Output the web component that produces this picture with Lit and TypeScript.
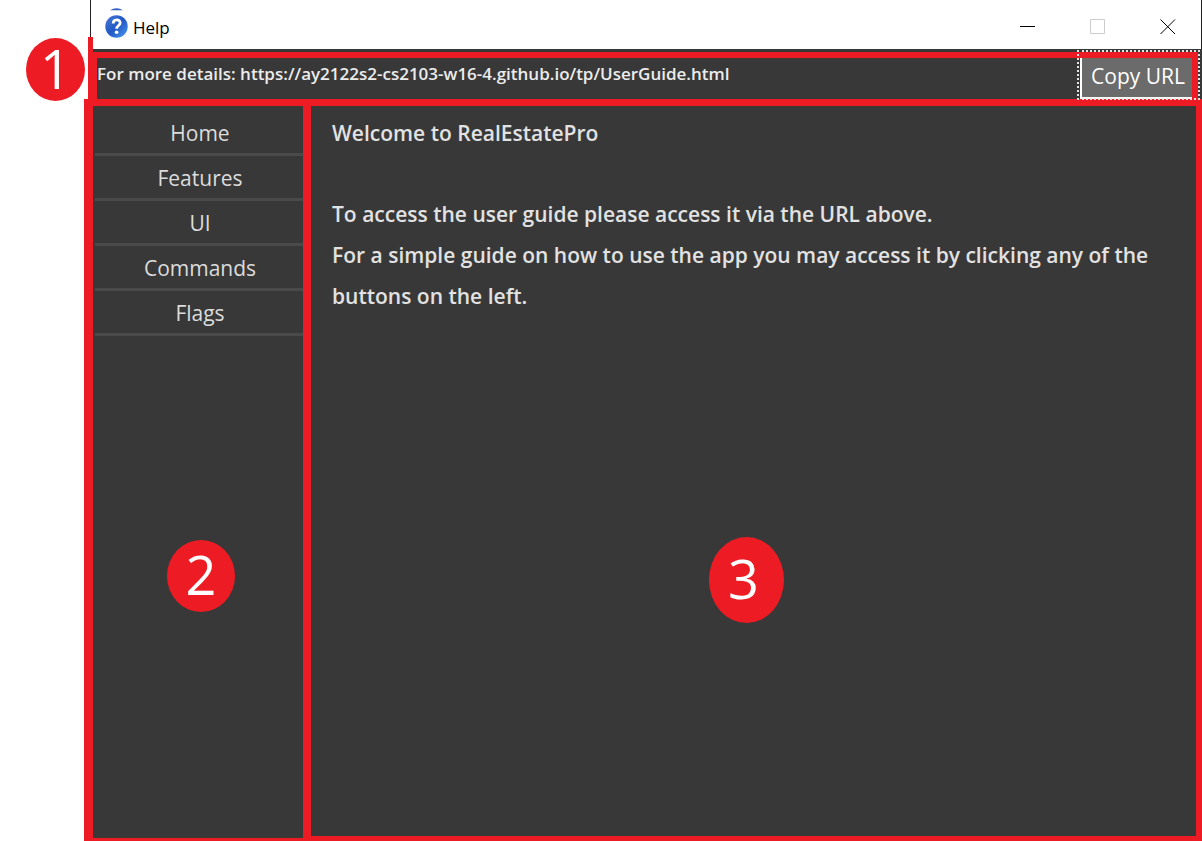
import { LitElement, html, css } from "lit";
import { customElement, state } from "lit/decorators.js";

@customElement("app-root")
export class AppRoot extends LitElement {
  static styles = css`
    :host {
      --red: #ed1c24;
      --dark: #383838;
      display: flex;
      flex-direction: column;
      box-sizing: border-box;
      min-height: 100vh;
      padding-left: 84px;
      background: #fff;
      font-family: "Open Sans", "Noto Sans", sans-serif;
      position: relative;
    }
    * { box-sizing: border-box; }
    button { font: inherit; border: 0; background: none; padding: 0; margin: 0; }
    .title-bar {
      display: flex;
      align-items: center;
      height: 49px;
      margin-left: 6px;
      padding: 4px 0 0 14px;
      border-left: 1px solid #222;
      border-right: 1px solid #222;
      color: #000;
    }
    .logo { display: block; width: 24px; height: 32px; margin-top: -6px; }
    .title { flex: 1; margin: 2px 0 0 4px; font-size: 17px; font-weight: 400; }
    .window-controls { display: flex; margin-right: -2px; }
    .window-controls button { width: 70px; height: 45px; display: grid; place-items: center; }
    .window-controls svg { display: block; }
    .url-bar {
      position: relative;
      height: 50px;
      margin-left: 4px;
      padding: 3px 4px 0 0;
      border-left: 5px solid var(--red);
      background: var(--dark);
    }
    .url-bar::before {
      content: "";
      position: absolute;
      left: -5px;
      top: -12px;
      width: 5px;
      height: 12px;
      background: var(--red);
    }
    .url-frame {
      display: flex;
      justify-content: space-between;
      height: 47px;
      border: 6px solid var(--red);
      border-left-width: 4px;
      border-bottom: 0;
    }
    .url { margin: 0; color: #ececec; font-size: 17px; font-weight: 600; line-height: 32px; white-space: nowrap; }
    .copy {
      height: 41px;
      padding: 0 7px 3px 9px;
      border-left: 2px solid #fff;
      border-bottom: 2px solid #fff;
      background: #6b6b6b;
      color: #fff;
      font-size: 21px;
      line-height: 36px;
      white-space: nowrap;
    }
    .focus-ring {
      position: absolute;
      top: 1px;
      right: 2px;
      bottom: -1px;
      width: 123px;
      border: 2px dotted #e4e4e4;
      pointer-events: none;
    }
    .body { display: flex; flex: 1; }
    .menu {
      flex: 0 0 227px;
      padding-left: 2px;
      border: solid var(--red);
      border-width: 7px 8px 3px 9px;
      background: var(--dark);
    }
    .menu button {
      display: block;
      width: 100%;
      height: 45px;
      padding: 2px 0 0 2px;
      border-bottom: 3px solid #4a4a4a;
      color: #dcdcdc;
      font-size: 21px;
      line-height: 36px;
    }
    .menu button:first-child { height: 50px; padding-top: 7px; }
    .content {
      flex: 1;
      padding: 7px 21px;
      border: solid var(--red);
      border-width: 7px 6px 5px 0;
      background: var(--dark);
      color: #e2e2e2;
      font-size: 21px;
      font-weight: 600;
      line-height: 41px;
    }
    .content h1 { margin: 0 0 40px; font: inherit; }
    .content p { margin: 0; }
    .badge {
      position: absolute;
      display: grid;
      place-items: center;
      padding-bottom: 4px;
      border-radius: 50%;
      background: var(--red);
      color: #fff;
      font-size: 54px;
      line-height: 56px;
    }
    .one { left: 26px; top: 38px; width: 59px; height: 63px; }
    .two { left: 167px; top: 540px; width: 68px; height: 72px; }
    .three { left: 709px; top: 537px; width: 75px; height: 86px; padding-right: 6px; }
  `;

  @state() private topics = ["Home", "Features", "UI", "Commands", "Flags"];

  render() {
    return html`
      <header class="title-bar">
        <svg class="logo" viewBox="0 0 24 32" aria-hidden="true">
          <defs>
            <linearGradient id="g" x1="0" y1="0" x2="1" y2="1">
              <stop offset="0" stop-color="#4a7ad4" />
              <stop offset=".5" stop-color="#2257c5" />
              <stop offset="1" stop-color="#4c9cf0" />
            </linearGradient>
          </defs>
          <path d="M5 2.200Q11.500-1.500 18 2.200Z" fill="#2f5fc0" />
          <circle cx="11.500" cy="18.500" r="11.200" fill="url(#g)" />
          <path d="M8.200 15.500C8.200 10.800 15.200 10.800 15.200 14.800C15.200 17.500 11.600 17.500 11.600 20.800" fill="none" stroke="#fff" stroke-width="2.800" />
          <circle cx="11.600" cy="24.300" r="1.800" fill="#fff" />
        </svg>
        <h2 class="title">Help</h2>
        <div class="window-controls">
          <button aria-label="Minimize">
            <svg width="16" height="16"><path d="M0 7.500H15" stroke="#000" /></svg>
          </button>
          <button aria-label="Maximize" disabled>
            <svg width="16" height="16"><path d="M.5.5h14v14H.5z" fill="none" stroke="#ccc" /></svg>
          </button>
          <button aria-label="Close">
            <svg width="16" height="16"><path d="M.5.5l14.500 14.500M15 .5l-14.500 14.500" stroke="#000" /></svg>
          </button>
        </div>
      </header>
      <section class="url-bar">
        <div class="url-frame">
          <p class="url">For more details: https://ay2122s2-cs2103-w16-4.github.io/tp/UserGuide.html</p>
          <button class="copy">Copy URL</button>
        </div>
        <span class="focus-ring"></span>
      </section>
      <div class="body">
        <nav class="menu">${this.topics.map((t) => html`<button>${t}</button>`)}</nav>
        <main class="content">
          <h1>Welcome to RealEstatePro</h1>
          <p>To access the user guide please access it via the URL above.</p>
          <p>For a simple guide on how to use the app you may access it by clicking any of the buttons on the left.</p>
        </main>
      </div>
      <span class="badge one">1</span>
      <span class="badge two">2</span>
      <span class="badge three">3</span>
    `;
  }
}
